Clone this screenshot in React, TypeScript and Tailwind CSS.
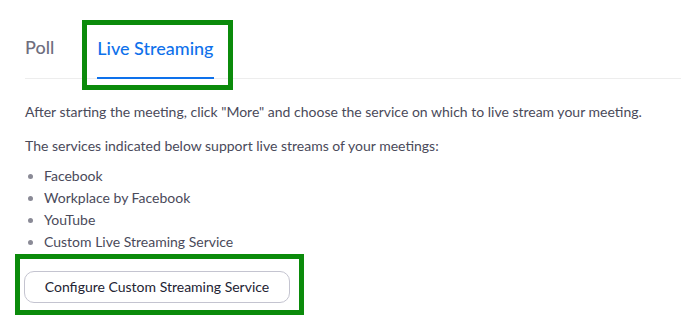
export default function App() {
  return (
    <div className="min-h-screen bg-white font-['Lato','Liberation_Sans',sans-serif] pl-[25px] pt-[36px]">
      {/* tabs */}
      <div className="flex items-end border-b border-[#ededed]">
        <div className="pb-[20px] text-[18px] font-medium text-[#6e6e7e] leading-[22px]">Poll</div>
        <div className="relative ml-[43px]">
          <div className="pb-[18px] text-[18px] font-medium text-[#0e71eb] leading-[22px]">Live Streaming</div>
          <div className="h-[2px] bg-[#0e71eb] -mb-px" />
          <div className="absolute -left-[15px] -right-[19px] -top-[17px] -bottom-[12px] border-[5px] border-[#0b8b0b]" />
        </div>
      </div>

      {/* content */}
      <div className="pt-[23px] text-[14px] text-[#4a4a5a] leading-[20px] pr-4">
        <p>After starting the meeting, click "More" and choose the service on which to live stream your meeting.</p>
        <p className="mt-[14px]">The services indicated below support live streams of your meetings:</p>
        <ul className="mt-[9px] list-disc pl-[19px] marker:text-[#8a8a96]">
          <li className="leading-[22px]">Facebook</li>
          <li className="leading-[22px]">Workplace by Facebook</li>
          <li className="leading-[22px]">YouTube</li>
          <li className="leading-[22px]">Custom Live Streaming Service</li>
        </ul>
        <div className="relative mt-[18px] -ml-px inline-block">
          <button className="w-[266px] h-[32px] rounded-[10px] border border-[#c4c4d0] bg-white text-[14px] text-[#232333]">
            Configure Custom Streaming Service
          </button>
          <div className="absolute -left-[9px] -right-[14px] -top-[17px] -bottom-[12px] border-[5px] border-[#0b8b0b]" />
        </div>
      </div>
    </div>
  );
}
